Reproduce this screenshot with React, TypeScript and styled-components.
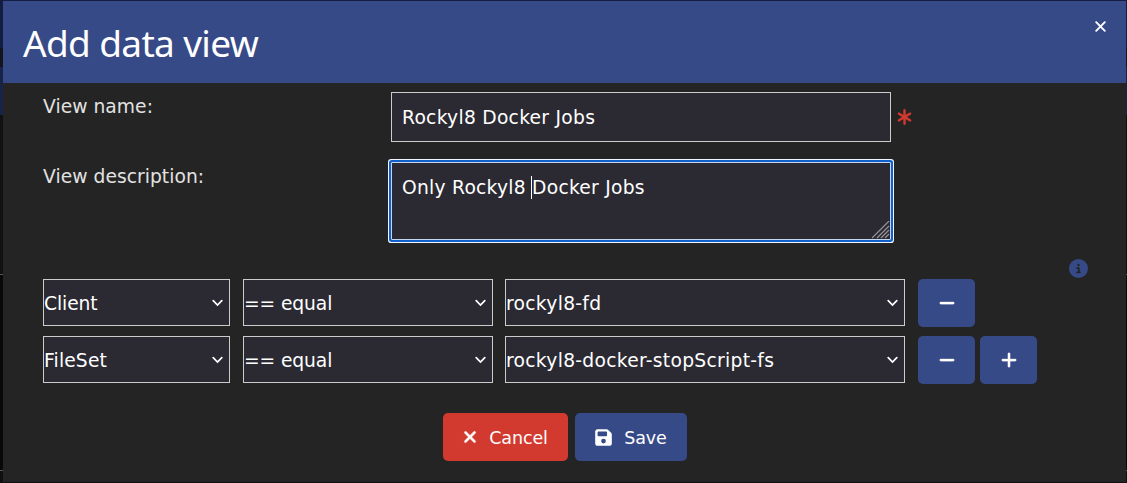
import React from "react";
import styled, { createGlobalStyle } from "styled-components";
import { FaAsterisk, FaCircleInfo, FaFloppyDisk, FaMinus, FaPlus, FaXmark } from "react-icons/fa6";

const GlobalStyle = createGlobalStyle`
  * { box-sizing: border-box; }
  body { margin: 0; overflow: hidden; background: #111113; }
`;

const Backdrop = styled.div`
  width: 1127px;
  height: 483px;
  padding: 1px 1px 1px 3px;
  background: linear-gradient(
    #141d3f 0 48px, #14151b 48px 67px, #172348 67px 115px, #111113 115px 274px,
    #55565a 274px 275px, #08080a 275px 470px, #55565a 470px 471px, #101012 471px
  );
  font-family: "DejaVu Sans", Verdana, sans-serif;
  font-size: 18.7px;
  line-height: 28px;
  color: #fff;
`;

const Dialog = styled.section`
  height: 481px;
  background: #242424;
`;

const Header = styled.header`
  display: flex;
  justify-content: space-between;
  height: 82px;
  padding: 14px 20px 0;
  background: #364a88;
`;

const Title = styled.h1`
  margin: 0;
  font: 400 37px/56px "Noto Sans", "Open Sans", sans-serif;
  letter-spacing: -0.65px;
  white-space: nowrap;
`;

const Close = styled.svg`
  width: 11px;
  height: 11px;
  margin-top: 6px;
`;

const Body = styled.div`
  padding: 9px 38px 0 40px;
`;

const Field = styled.div<{ $gap: number }>`
  display: flex;
  align-items: flex-start;
  margin-bottom: ${(p) => p.$gap}px;
`;

const Label = styled.div`
  width: 348px;
  padding-top: 1px;
  letter-spacing: 0.04px;
  color: #e2e2e2;
`;

const Text = styled.span<{ $spacing?: number }>`
  letter-spacing: ${(p) => p.$spacing ?? 0}px;
  white-space: pre;
`;

const TextBox = styled.div<{ $height: number; $focused?: boolean }>`
  display: flex;
  justify-content: space-between;
  width: 500px;
  height: ${(p) => p.$height}px;
  padding: 11px 0 0 10px;
  border: 1px solid ${(p) => (p.$focused ? "#c4d5ee" : "#cbcbcb")};
  background: #2b2a33;
  ${(p) => p.$focused && "border-radius: 1px; box-shadow: 0 0 0 2px #1260cc, 0 0 0 3px #f2f7ff;"}
`;

const Caret = styled.span`
  display: inline-block;
  width: 1px;
  height: 23px;
  margin: 0 0 0 -1px;
  vertical-align: -5px;
  background: #fff;
`;

const Grip = styled.svg`
  align-self: flex-end;
  width: 18px;
  height: 18px;
`;

const Required = styled(FaAsterisk)`
  width: 17px;
  height: 18px;
  margin: 16px 0 0 5px;
  color: #d13a30;
  stroke: currentColor;
  stroke-width: 8px;
  overflow: visible;
`;

const InfoRow = styled.div`
  display: flex;
  justify-content: flex-end;
  height: 20px;
`;

const Info = styled(FaCircleInfo)`
  width: 19px;
  height: 19px;
  color: #364a88;
`;

const Rule = styled.div`
  display: flex;
  align-items: flex-start;
  height: 57px;
`;

const SelectBox = styled.div<{ $width: number; $gap: number }>`
  display: flex;
  justify-content: space-between;
  align-items: center;
  width: ${(p) => p.$width}px;
  height: 47px;
  margin-right: ${(p) => p.$gap}px;
  padding: 2px 6px 0 0;
  border: 1px solid #cbcbcb;
  background: #2b2a33;
`;

const Chevron = styled.svg`
  width: 11px;
  height: 8px;
  margin-bottom: 1px;
`;

const Button = styled.div<{ $width: number; $danger?: boolean }>`
  display: flex;
  align-items: center;
  justify-content: center;
  gap: 12px;
  width: ${(p) => p.$width}px;
  height: 48px;
  border-radius: 5px;
  background: ${(p) => (p.$danger ? "#d23a30" : "#364a88")};
  font-size: 17.5px;
`;

const Square = styled(Button)`
  margin-right: 5px;

  svg {
    stroke: currentColor;
    stroke-width: 8px;
  }
`;

const CancelIcon = styled(FaXmark)`
  width: 14px;
  height: 18px;
  stroke: currentColor;
  stroke-width: 14px;
`;

const SaveIcon = styled(FaFloppyDisk)`
  width: 17px;
  height: 19px;
`;

const ButtonText = styled.span`
  padding-top: 1px;
  letter-spacing: -0.1px;
`;

const Actions = styled.div`
  display: flex;
  justify-content: center;
  gap: 7px;
  margin: 20px 1px 0 0;
`;

type SelectProps = { width: number; gap?: number; spacing?: number; children: React.ReactNode };

const Select = ({ width, gap = 12, spacing, children }: SelectProps) => (
  <SelectBox $width={width} $gap={gap}>
    <Text $spacing={spacing}>{children}</Text>
    <Chevron viewBox="0 0 11 8" fill="none" stroke="#fff" strokeWidth="1.7" strokeLinecap="round">
      <path d="M1.2 1.6 5.5 6.1l4.3-4.5" />
    </Chevron>
  </SelectBox>
);

export default function App() {
  return (
    <Backdrop>
      <GlobalStyle />
      <Dialog>
        <Header>
          <Title>Add data view</Title>
          <Close viewBox="0 0 11 11" stroke="#fff" strokeWidth="1.9" strokeLinecap="round">
            <path d="M1.2 1.2l8.6 8.6M9.8 1.2 1.2 9.8" />
          </Close>
        </Header>
        <Body>
          <Field $gap={20}>
            <Label>View name:</Label>
            <TextBox $height={50}><Text $spacing={0.27}>Rockyl8 Docker Jobs</Text></TextBox>
            <Required />
          </Field>
          <Field $gap={19}>
            <Label>View description:</Label>
            <TextBox $height={78} $focused>
              <Text $spacing={0.25}>Only Rockyl8 <Caret />Docker Jobs</Text>
              <Grip viewBox="0 0 18 18" stroke="#96969a" strokeWidth="1.2">
                <path d="M0 17 17 0M5 17 17 5M9 17l8-8M13 17l4-4" />
              </Grip>
            </TextBox>
          </Field>
          <InfoRow><Info /></InfoRow>
          <Rule>
            <Select width={187} gap={13} spacing={-0.1}>Client</Select>
            <Select width={250} spacing={-0.1}>== equal</Select>
            <Select width={400} gap={13} spacing={0.29}>rockyl8-fd</Select>
            <Square $width={57}><FaMinus size={18} /></Square>
          </Rule>
          <Rule>
            <Select width={187} gap={13} spacing={0.15}>FileSet</Select>
            <Select width={250} spacing={-0.1}>== equal</Select>
            <Select width={400} gap={13} spacing={0.29}>rockyl8-docker-stopScript-fs</Select>
            <Square $width={57}><FaMinus size={18} /></Square>
            <Square $width={57}><FaPlus size={18} /></Square>
          </Rule>
          <Actions>
            <Button $width={125} $danger><CancelIcon /><ButtonText>Cancel</ButtonText></Button>
            <Button $width={112}><SaveIcon /><ButtonText>Save</ButtonText></Button>
          </Actions>
        </Body>
      </Dialog>
    </Backdrop>
  );
}
